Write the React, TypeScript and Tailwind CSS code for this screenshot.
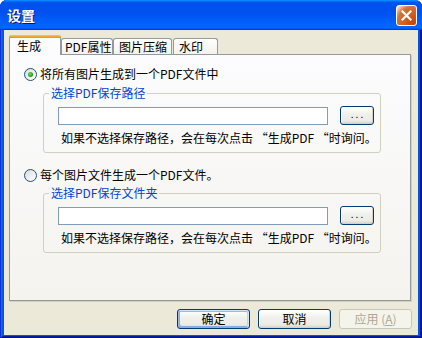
import React from "react";

function Radio({ checked }: { checked?: boolean }) {
  return (
    <span className="relative w-[13px] h-[13px] rounded-full border border-[#1c5180] bg-[linear-gradient(135deg,#dcdcd7,#ffffff)] flex items-center justify-center shrink-0">
      {checked && (
        <span className="w-[5px] h-[5px] rounded-full bg-[radial-gradient(circle_at_40%_40%,#6de06a,#21a121_60%,#0f8a0f)]" />
      )}
    </span>
  );
}

function XpButton({
  children,
  def,
  disabled,
  className = "",
}: {
  children: React.ReactNode;
  def?: boolean;
  disabled?: boolean;
  className?: string;
}) {
  if (disabled) {
    return (
      <div
        className={
          "flex items-center justify-center rounded-[3px] border border-[#c9c7ba] bg-[#f5f4ea] text-[#aca899] " +
          className
        }
      >
        {children}
      </div>
    );
  }
  return (
    <div
      className={
        "flex items-center justify-center rounded-[3px] border border-[#003c74] bg-[linear-gradient(180deg,#ffffff,#f0f0ea_45%,#ecebe6_80%,#d6d0c5)] text-black " +
        (def
          ? "shadow-[inset_-1px_1px_#cee7ff,inset_1px_2px_#98b8ea,inset_-2px_2px_#bcd4f6,inset_1px_-1px_#89ade4,inset_2px_-2px_#89ade4] "
          : "shadow-[inset_-1px_-1px_#d6d0c5,inset_1px_1px_#ffffff] ") +
        className
      }
    >
      {children}
    </div>
  );
}

function Group({ legend }: { legend: string }) {
  return (
    <fieldset className="ml-[19px] w-[338px] min-w-0 border border-[#d0d0bf] rounded-[3px]">
      <legend className="ml-[5px] px-[2px] h-[14px] leading-[14px] text-[#0046d5]">
        {legend}
      </legend>
      <div className="pl-[14px] pr-[5px] pt-[6px] pb-[7px]">
        <div className="flex items-center h-[19px]">
          <div className="w-[270px] h-[18px] shrink-0 border border-[#7f9db9] bg-white" />
          <XpButton className="ml-[12px] w-[34px] h-[19px] shrink-0">
            <span className="text-[10px] leading-none tracking-[2px] -mt-[3px] pl-[2px]">...</span>
          </XpButton>
        </div>
        <div className="mt-[6px] ml-[3px] h-[14px] leading-[14px] whitespace-nowrap">
          如果不选择保存路径，会在每次点击 “生成PDF “时询问。
        </div>
      </div>
    </fieldset>
  );
}

export default function App() {
  return (
    <div className="w-[422px] h-[338px] flex flex-col bg-[#0855dd] shadow-[inset_1px_0_#0831d9,inset_-1px_-1px_#00138c,inset_2px_0_#166aee,inset_-2px_-2px_#001ea0] rounded-t-[7px] overflow-hidden font-['Noto_Sans_CJK_SC','Noto_Sans',sans-serif] text-[12px] text-black">
      {/* Title bar */}
      <div className="h-[30px] shrink-0 flex items-center pl-[7px] pr-[5px] bg-[linear-gradient(180deg,#0997ff,#0053ee_8%,#0050ee_40%,#0066ff_88%,#0066ff_93%,#005bff_95%,#003dd7_96%,#003dd7)]">
        <span className="text-white font-bold text-[14px] leading-[16px] [text-shadow:1px_1px_#0f1089]">
          设置
        </span>
        <div className="ml-auto w-[21px] h-[21px] rounded-[3px] border border-white bg-[radial-gradient(circle_at_90%_90%,#cc4600_0,#dc6527_55%,#cd7546_70%,#ffccb2_90%,#ffffff_100%)] flex items-center justify-center">
          <svg width="11" height="11" viewBox="0 0 11 11">
            <path d="M1.5 1.5 L9.5 9.5 M9.5 1.5 L1.5 9.5" stroke="white" strokeWidth="2.2" strokeLinecap="square" />
          </svg>
        </div>
      </div>

      {/* Body */}
      <div className="flex-1 mx-[4px] mb-[3px] bg-[#ece9d8] flex flex-col pt-[5px]">
        <div className="ml-[5px] mr-[7px] flex flex-col">
          {/* Tabs */}
          <div className="flex items-end h-[19px] relative z-10">
            <div className="w-[52px] h-[20px] -mb-[1px] border-x border-[#919b9c] bg-[#fcfcfe] rounded-t-[3px] flex flex-col">
              <div className="h-[3px] rounded-t-[3px] bg-[linear-gradient(180deg,#ffc73c,#e68b2c)] -mx-[1px]" />
              <div className="flex-1 pl-[7px] leading-[16px]">生成</div>
            </div>
            <div className="w-[52px] h-[16px] border border-b-0 border-[#919b9c] bg-[linear-gradient(180deg,#ffffff,#f3f2ed)] rounded-t-[3px] pl-[3px] leading-[15px] whitespace-nowrap">
              PDF属性
            </div>
            <div className="w-[59px] h-[16px] border border-b-0 border-[#919b9c] bg-[linear-gradient(180deg,#ffffff,#f3f2ed)] rounded-t-[3px] pl-[5px] leading-[15px] whitespace-nowrap">
              图片压缩
            </div>
            <div className="ml-[1px] w-[45px] h-[16px] border border-b-0 border-[#919b9c] bg-[linear-gradient(180deg,#ffffff,#f3f2ed)] rounded-t-[3px] pl-[5px] leading-[15px] whitespace-nowrap">
              水印
            </div>
          </div>
          {/* Panel */}
          <div className="h-[247px] border border-[#919b9c] shadow-[1px_1px_0_#d3d0c2] bg-[linear-gradient(180deg,#fcfcfe,#f4f3ee)] pl-[14px] pt-[12px] flex flex-col">
            <div className="flex items-center h-[14px] gap-[3px]">
              <Radio checked />
              <span className="leading-[14px]">将所有图片生成到一个PDF文件中</span>
            </div>
            <div className="mt-[5px]">
              <Group legend="选择PDF保存路径" />
            </div>
            <div className="mt-[15px] flex items-center h-[14px] gap-[3px]">
              <Radio />
              <span className="leading-[14px]">每个图片文件生成一个PDF文件。</span>
            </div>
            <div className="mt-[4px]">
              <Group legend="选择PDF保存文件夹" />
            </div>
          </div>
        </div>
        {/* Buttons */}
        <div className="mt-[8px] flex justify-end gap-[8px] pr-[6px]">
          <XpButton def className="w-[73px] h-[20px]">确定</XpButton>
          <XpButton className="w-[73px] h-[20px]">取消</XpButton>
          <XpButton disabled className="w-[73px] h-[20px]">
            <span>
              应用 (<span className="underline">A</span>)
            </span>
          </XpButton>
        </div>
      </div>
    </div>
  );
}
